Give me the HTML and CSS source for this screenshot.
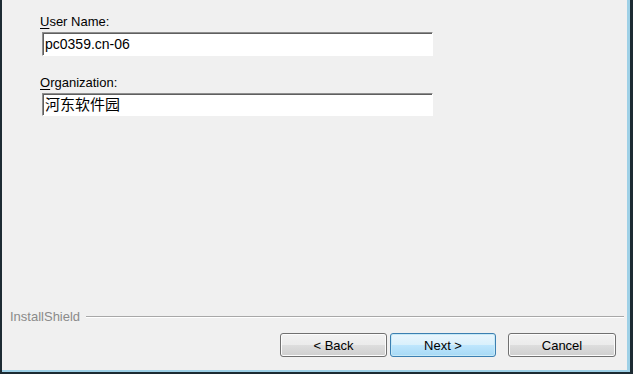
FILE: index.html
```html
<!DOCTYPE html>
<html lang="zh-CN">
<head>
    <meta charset="UTF-8">
    <title>Customer Information</title>
    <link rel="stylesheet" href="styles.css">
</head>
<body>
<div class="window">
    <div class="dialog">
        <div class="fields">
            <label class="field-label" for="user"><u>U</u>ser Name:</label>
            <div class="textbox" id="user">pc0359.cn-06</div>
            <label class="field-label second" for="org"><u>O</u>rganization:</label>
            <div class="textbox cjk" id="org">河东软件园</div>
        </div>
        <div class="footer">
            <div class="brand">
                <span>InstallShield</span>
                <span class="rule"></span>
            </div>
            <div class="buttons">
                <button class="btn">&lt; Back</button>
                <button class="btn default">Next &gt;</button>
                <button class="btn cancel">Cancel</button>
            </div>
        </div>
    </div>
</div>
</body>
</html>
```

FILE: styles.css
```css
body {
    margin: 0;
    background: #fff;
    font-family: 'Liberation Sans', 'Noto Sans CJK SC', sans-serif;
    font-size: 13px;
    color: #000;
}
u {
    text-decoration: underline;
    text-underline-offset: 2px;
}
.window {
    width: 633px;
    border-left: 2px solid #1d2b33;
    border-right: 3px solid #1d2b33;
    border-bottom: 2px solid #1d2b33;
    box-sizing: border-box;
}
.dialog {
    height: 372px;
    display: flex;
    flex-direction: column;
    background: #f0f0f0;
    border-right: 3px solid #9ed0e6;
    border-bottom: 2px solid #9ed0e6;
    box-sizing: border-box;
}
.fields {
    padding: 14px 0 0 38px;
}
.field-label {
    display: block;
    line-height: 15px;
    margin-bottom: 3px;
}
.field-label.second {
    margin-top: 19px;
}
.textbox {
    width: 391px;
    height: 24px;
    margin-left: 2px;
    box-sizing: border-box;
    padding: 0 0 0 2px;
    background: #fff;
    border: 1px solid;
    border-color: #8e8e8e #fff #fff #8e8e8e;
    box-shadow: inset 1px 1px 0 #5f5f5f;
    font-size: 14px;
    line-height: 22px;
}
.textbox.cjk {
    height: 23px;
    font-size: 15px;
    line-height: 21px;
}
.footer {
    margin-top: auto;
    padding-bottom: 13px;
}
.brand {
    display: flex;
    align-items: center;
    gap: 6px;
    padding: 0 3px 0 8px;
    line-height: 15px;
    color: #8a8a8a;
    margin-bottom: 9px;
}
.rule {
    flex: 1;
    border-top: 1px solid #a8a8a8;
    border-bottom: 1px solid #fff;
}
.buttons {
    display: flex;
    justify-content: flex-end;
    gap: 3px;
    padding-right: 11px;
}
.btn {
    width: 107px;
    height: 24px;
    font-family: inherit;
    font-size: 13px;
    color: #000;
    border: 1px solid #707070;
    border-radius: 3px;
    box-shadow: inset 0 0 0 1px #fcfcfc;
    background: linear-gradient(#f2f2f2 0%, #ebebeb 50%, #dddddd 51%, #cfcfcf 100%);
    padding: 0;
}
.btn.default {
    width: 106px;
    border-color: #3c7fb1;
    box-shadow: inset 0 0 0 1px #c6e9f7;
    background: linear-gradient(#eaf6fd 0%, #d9f0fc 50%, #bee6fd 51%, #a7d9f5 100%);
}
.btn.cancel {
    width: 108px;
    margin-left: 9px;
}
```
